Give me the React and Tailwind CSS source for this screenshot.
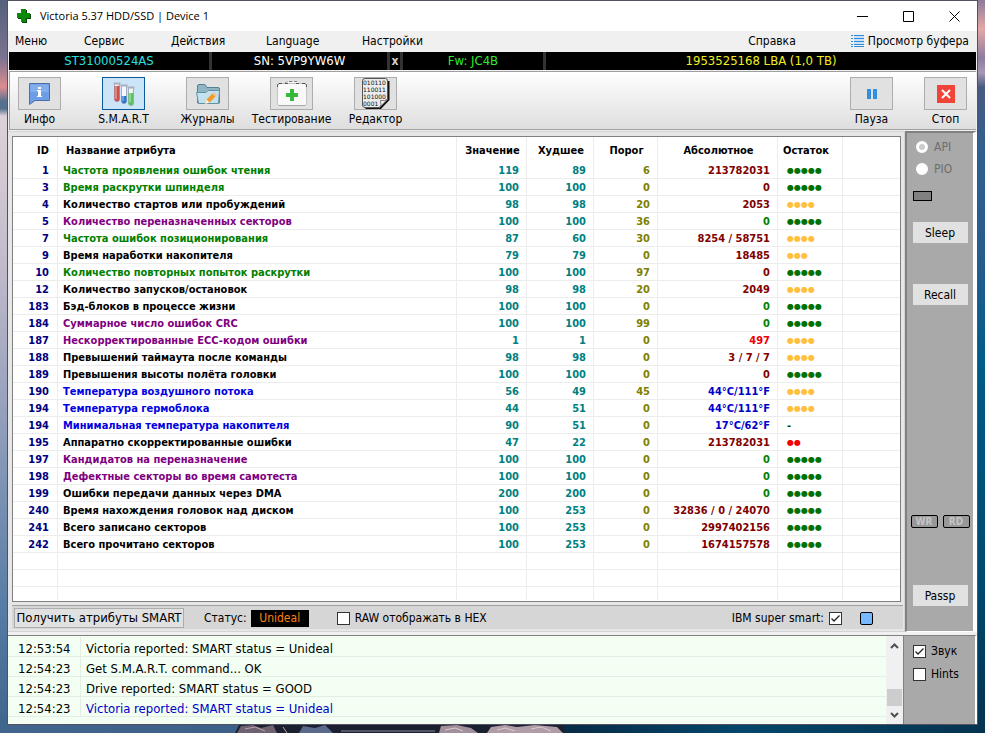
const MENU = [
    { label: "Меню", width: "w-[69px]" },
    { label: "Сервис", width: "w-[87px]" },
    { label: "Действия", width: "w-[95px]" },
    { label: "Language", width: "w-[96px]" },
    { label: "Настройки", width: "w-[96px]" },
];

const NAME_COLORS = {
    green: "text-[#008000]",
    black: "text-black",
    purple: "text-[#800080]",
    blue: "text-[#0000e0]",
};

const RAW_COLORS = {
    maroon: "text-[#800000]",
    green: "text-[#008000]",
    red: "text-[#f00000]",
    blue: "text-[#0000c8]",
};

const HEALTH_COLORS = {
    5: "text-[#007000]",
    4: "text-[#ffc040]",
    3: "text-[#ffc040]",
    2: "text-[#f00000]",
};

// id, name, name color, value, worst, threshold, raw, raw color, health dots
const ATTRIBUTES = [
    [1, "Частота проявления ошибок чтения", "green", 119, 89, 6, "213782031", "maroon", 5],
    [3, "Время раскрутки шпинделя", "green", 100, 100, 0, "0", "maroon", 5],
    [4, "Количество стартов или пробуждений", "black", 98, 98, 20, "2053", "maroon", 4],
    [5, "Количество переназначенных секторов", "purple", 100, 100, 36, "0", "green", 5],
    [7, "Частота ошибок позиционирования", "green", 87, 60, 30, "8254 / 58751", "maroon", 4],
    [9, "Время наработки накопителя", "black", 79, 79, 0, "18485", "maroon", 3],
    [10, "Количество повторных попыток раскрутки", "green", 100, 100, 97, "0", "maroon", 5],
    [12, "Количество запусков/остановок", "black", 98, 98, 20, "2049", "maroon", 4],
    [183, "Бэд-блоков в процессе жизни", "black", 100, 100, 0, "0", "green", 5],
    [184, "Суммарное число ошибок CRC", "purple", 100, 100, 99, "0", "green", 5],
    [187, "Нескорректированные ECC-кодом ошибки", "purple", 1, 1, 0, "497", "red", 4],
    [188, "Превышений таймаута после команды", "black", 98, 98, 0, "3 / 7 / 7", "maroon", 4],
    [189, "Превышения высоты полёта головки", "black", 100, 100, 0, "0", "maroon", 5],
    [190, "Температура воздушного потока", "blue", 56, 49, 45, "44°C/111°F", "blue", 4],
    [194, "Температура гермоблока", "blue", 44, 51, 0, "44°C/111°F", "blue", 4],
    [194, "Минимальная температура накопителя", "blue", 90, 51, 0, "17°C/62°F", "blue", 0],
    [195, "Аппаратно скорректированные ошибки", "black", 47, 22, 0, "213782031", "maroon", 2],
    [197, "Кандидатов на переназначение", "purple", 100, 100, 0, "0", "green", 5],
    [198, "Дефектные секторы во время самотеста", "purple", 100, 100, 0, "0", "green", 5],
    [199, "Ошибки передачи данных через DMA", "black", 200, 200, 0, "0", "green", 5],
    [240, "Время нахождения головок над диском", "black", 100, 253, 0, "32836 / 0 / 24070", "maroon", 5],
    [241, "Всего записано секторов", "black", 100, 253, 0, "2997402156", "maroon", 5],
    [242, "Всего прочитано секторов", "black", 100, 253, 0, "1674157578", "maroon", 5],
];

const LOG = [
    { time: "12:53:54", text: "Victoria reported: SMART status = Unideal" },
    { time: "12:54:23", text: "Get S.M.A.R.T. command... OK" },
    { time: "12:54:23", text: "Drive reported: SMART status = GOOD" },
    { time: "12:54:23", text: "Victoria reported: SMART status = Unideal", blue: true },
];

function InfoIcon() {
    return (
        <svg width="24" height="24" viewBox="0 0 24 24">
            <path d="M1.500 1.500H21.500V18.500H7L1.500 22.500Z" fill="#6c9ee6" stroke="#4a6ea8" />
            <path d="M2.500 2.500H20.500V10H2.500Z" fill="#82aeee" />
            <path d="M10 5H13V7H10ZM9 8H13V14H14V15H9V14H10V9H9Z" fill="#fff" />
        </svg>
    );
}

function TubesIcon() {
    return (
        <svg width="24" height="26" viewBox="0 0 24 26">
            <g stroke="#a4aec0">
                <path d="M2.500 2.500H7.500V18A2.500 2.500 0 0 1 2.500 18Z" fill="#f0e4e8" />
                <path d="M9.500 4.500H14.500V20A2.500 2.500 0 0 1 9.500 20Z" fill="#f4f8ff" />
                <path d="M16.500 6.500H21.500V22A2.500 2.500 0 0 1 16.500 22Z" fill="#e8f4ea" />
            </g>
            <path d="M2.500 5H7.500V18A2.500 2.500 0 0 1 2.500 18Z" fill="#d0504c" />
            <path d="M9.500 15H14.500V20A2.500 2.500 0 0 1 9.500 20Z" fill="#2f78cc" />
            <path d="M16.500 12H21.500V22A2.500 2.500 0 0 1 16.500 22Z" fill="#5cc45c" />
            <path d="M4 4V18M11 6V20M18 8V21" stroke="#fff" strokeOpacity="0.6" />
            <path d="M1.500 2.500H8.500M8.500 4.500H15.500M15.500 6.500H22.500" stroke="#a8b0c0" strokeWidth="2" />
        </svg>
    );
}

function FolderIcon() {
    return (
        <svg width="26" height="24" viewBox="0 0 26 24">
            <path d="M2.500 21V4Q2.500 2.500 4 2.500H10L12 5.500H23Q24.500 5.500 24.500 7V21Z" fill="#8fb4c4" stroke="#56808f" />
            <path d="M3.500 21.500 1.500 10.500H11L13 8.500H24.500L23.500 21.500Z" fill="#c2e2ee" stroke="#6292a4" />
            <path d="M10 22 11.500 17.500 17.500 11.500 20.500 14.500 14.500 20.500Z" fill="#f59a28" />
            <path d="M17.500 11.500 19 10 22 13 20.500 14.500Z" fill="#e8c49c" />
            <path d="M10 22 11.500 17.500 14.500 20.500Z" fill="#fff2dc" />
        </svg>
    );
}

function KitIcon() {
    return (
        <svg width="32" height="28" viewBox="0 0 32 28">
            <path d="M9 3.500 11 1.500H21L23 3.500" fill="#f4f4f4" stroke="#777" strokeDasharray="3 2" />
            <rect x="1.500" y="3.500" width="29" height="22" rx="2" fill="#f9f9f9" stroke="#c4c4c4" />
            <path d="M1.500 7V5L3 3.500H6M26 3.500H29L30.500 5V7M9 3.500H12M20 3.500H23" fill="none" stroke="#555" />
            <path d="M3 25.500H29" stroke="#aaa" />
            <path d="M14 9H18V13H22V17H18V21H14V17H10V13H14Z" fill="#35b83c" />
        </svg>
    );
}

function HexIcon() {
    return (
        <svg width="30" height="31" viewBox="0 0 30 31">
            <path d="M3 3H28.500V22L20 31H5L3 29Z" fill="#111" />
            <path d="M4 .5H24.500Q26.500.5 26.500 3V21L18.500 29.500H4Q1.500 29.500 1.500 27V3Q1.500.5 4 .5Z" fill="#ececec" stroke="#555" />
            <g fontFamily="DejaVu Sans, sans-serif" fontSize="6" fill="#111">
                <text x="2" y="7">010110</text>
                <text x="2" y="14">110011</text>
                <text x="2" y="21">101000</text>
                <text x="2" y="28">0001</text>
            </g>
            <path d="M18.500 29.500Q21 27 19.500 22.500Q24 23.500 26.500 21Z" fill="#fff" stroke="#777" />
        </svg>
    );
}

function PauseIcon() {
    return (
        <svg width="10" height="10" viewBox="0 0 10 10" fill="#2f90e0">
            <path d="M0 0H4V10H0ZM6 0H10V10H6Z" />
        </svg>
    );
}

function StopIcon() {
    return (
        <svg width="18" height="18" viewBox="0 0 18 18">
            <path d="M0 0H18V18H0Z" fill="#f04438" />
            <path d="M5 5 13 13M13 5 5 13" stroke="#fff" strokeWidth="2" />
        </svg>
    );
}

function ToolButton({ label, active, children }) {
    return (
        <button className="flex w-[43px] flex-col items-center gap-[1px]">
            <span className={`flex h-[33px] w-[43px] items-center justify-center border ${active ? "border-[#0a5a9c] bg-[#cce4f7]" : "border-[#adadad] bg-[#e1e1e1]"}`}>
                {children}
            </span>
            <span className="whitespace-nowrap leading-4">{label}</span>
        </button>
    );
}

function Checkbox({ id, checked }) {
    return (
        <span className="grid size-[13px]">
            <input
                id={id}
                type="checkbox"
                defaultChecked={checked}
                className="peer col-start-1 row-start-1 size-[13px] appearance-none border border-[#333] bg-white"
            />
            <svg viewBox="0 0 13 13" className="pointer-events-none invisible col-start-1 row-start-1 size-[13px] peer-checked:visible">
                <path d="M2.500 6.500 5 9 10.500 3.500" fill="none" stroke="#222" strokeWidth="1.300" />
            </svg>
        </span>
    );
}

function Radio({ id, label, checked }) {
    return (
        <div className="flex items-center gap-1.5 text-[#6d6d6d]">
            <input
                id={id}
                type="radio"
                name="access"
                disabled
                defaultChecked={checked}
                className="size-3 appearance-none rounded-full border-3 border-white bg-white checked:bg-[#cccccc]"
            />
            <label htmlFor={id}>{label}</label>
        </div>
    );
}

function SideButton({ children }) {
    return <button className="h-[21px] w-[55px] bg-[#e1e1e1]">{children}</button>;
}

function AttributeTable() {
    const line = "border-r border-[#ececec]";
    const cell = `${line} border-b pt-0.5 pr-[7px] text-right`;
    const head = `${line} pt-0.5 pl-0.5`;

    return (
        <table className="w-full table-fixed border-separate border-spacing-0 text-[11px] leading-[14px] font-bold whitespace-nowrap">
            <colgroup>
                <col className="w-[45px]" />
                <col />
                <col className="w-[70px]" />
                <col className="w-[67px]" />
                <col className="w-[64px]" />
                <col className="w-[120px]" />
                <col className="w-[65px]" />
                <col className="w-[57px]" />
            </colgroup>
            <thead>
                <tr className="h-[25px]">
                    <th scope="col" className={`${line} pt-0.5 pr-2 text-right`}>ID</th>
                    <th scope="col" className={`${line} pt-0.5 pl-2 text-left`}>Название атрибута</th>
                    <th scope="col" className={head}>Значение</th>
                    <th scope="col" className={head}>Худшее</th>
                    <th scope="col" className={head}>Порог</th>
                    <th scope="col" className={head}>Абсолютное</th>
                    <th scope="col" className={`${line} pt-0.5 pl-[5px] text-left`}>Остаток</th>
                    <td />
                </tr>
            </thead>
            <tbody>
                {ATTRIBUTES.map(([id, name, color, value, worst, limit, raw, rawColor, dots], i) => (
                    <tr key={i} className="h-[17px]">
                        <td className={`${line} border-b pt-0.5 pr-2 text-right text-[#000080]`}>{id}</td>
                        <td className={`${line} border-b pt-0.5 pl-[5px] ${NAME_COLORS[color]}`}>{name}</td>
                        <td className={`${cell} text-[#008080]`}>{value}</td>
                        <td className={`${cell} text-[#008080]`}>{worst}</td>
                        <td className={`${cell} text-[#808000]`}>{limit}</td>
                        <td className={`${cell} ${RAW_COLORS[rawColor]}`}>{raw}</td>
                        {dots ? (
                            <td className={`${line} border-b pt-0.5 pl-[9px] font-['DejaVu_Sans',sans-serif] text-[8px] font-normal ${HEALTH_COLORS[dots]}`}>
                                {"●".repeat(dots)}
                            </td>
                        ) : (
                            <td className={`${line} border-b pt-0.5 pl-[9px] text-[#005000]`}>-</td>
                        )}
                        <td className="border-b border-[#ececec]" />
                    </tr>
                ))}
                {["h-[17px]", "h-[17px]", "h-[13px]"].map((height, i) => (
                    <tr key={`empty-${i}`} className={height}>
                        {Array.from({ length: 8 }, (_, j) => (
                            <td key={j} className={`border-[#ececec] ${j < 7 ? "border-r" : ""} ${i < 2 ? "border-b" : ""}`} />
                        ))}
                    </tr>
                ))}
            </tbody>
        </table>
    );
}

function TitleBar() {
    return (
        <header className="flex h-[30px] items-center bg-white pr-[17px] pl-2">
            <svg width="16" height="16" viewBox="0 0 16 16">
                <path d="M6 2H11V6H15V11H11V15H6V11H2V6H6Z" fill="#064a06" />
                <path d="M5 1H10V5H14V10H10V14H5V10H1V5H5Z" fill="#0a8a0a" />
            </svg>
            <h1 className="ml-2 font-['Open_Sans','Noto_Sans',sans-serif] text-[11px]">Victoria 5.37 HDD/SSD | Device 1</h1>
            <div className="ml-auto flex items-center gap-[35px]">
                <button aria-label="Minimize">
                    <svg width="11" height="11" viewBox="0 0 11 11" stroke="#000"><path d="M0 5.500H11" /></svg>
                </button>
                <button aria-label="Maximize">
                    <svg width="11" height="11" viewBox="0 0 11 11" stroke="#000" fill="none"><path d="M.5.5H10.500V10.500H.5Z" /></svg>
                </button>
                <button aria-label="Close">
                    <svg width="11" height="11" viewBox="0 0 11 11" stroke="#000"><path d="M.5.5 10.500 10.500M10.500.5.5 10.500" /></svg>
                </button>
            </div>
        </header>
    );
}

function MenuBar() {
    return (
        <nav className="flex h-[21px] items-center bg-[#f0f0f0] pr-2 pb-0.5 pl-[7px]">
            {MENU.map((item) => (
                <button key={item.label} className={`${item.width} text-left`}>{item.label}</button>
            ))}
            <button className="mr-[55px] ml-auto">Справка</button>
            <button className="flex items-center gap-1">
                <svg width="13" height="12" viewBox="0 0 13 12" stroke="#2f8ad8">
                    <path d="M0 .5H2M3 .5H13M0 3.500H2M3 3.500H13M0 6.500H2M3 6.500H13M0 9.500H2M3 9.500H13M0 11.500H2M3 11.500H13" />
                    <path d="M3 2H13M3 5H13M3 8H13" stroke="#a8d4f4" />
                </svg>
                Просмотр буфера
            </button>
        </nav>
    );
}

function DriveBar() {
    return (
        <div className="mx-px flex h-[18px] bg-black text-center text-[13px] leading-[18px]">
            <div className="w-[200px] text-[#28e0e0]">ST31000524AS</div>
            <div className="w-[178px] border-l-3 border-[#333] text-white">SN: 5VP9YW6W</div>
            <button className="w-4 border-x-3 border-[#333] text-xs font-bold text-[#d0d0d0]">x</button>
            <div className="w-[140px] text-[#30e830]">Fw: JC4B</div>
            <div className="flex-1 border-l-3 border-[#333] text-[#f0f020]">1953525168 LBA (1,0 TB)</div>
        </div>
    );
}

function Toolbar() {
    return (
        <div className="mx-px mt-px flex h-[59px] justify-between border-y border-l border-[#a0a0a0] bg-gradient-to-b from-white to-[#dedede] pt-[5px] pr-[9px] pl-2">
            <div className="flex gap-[41px]">
                <ToolButton label="Инфо"><InfoIcon /></ToolButton>
                <ToolButton label="S.M.A.R.T" active><TubesIcon /></ToolButton>
                <ToolButton label="Журналы"><FolderIcon /></ToolButton>
                <ToolButton label="Тестирование"><KitIcon /></ToolButton>
                <ToolButton label="Редактор"><HexIcon /></ToolButton>
            </div>
            <div className="flex gap-[31px]">
                <ToolButton label="Пауза"><PauseIcon /></ToolButton>
                <ToolButton label="Стоп"><StopIcon /></ToolButton>
            </div>
        </div>
    );
}

function StatusBar() {
    return (
        <div className="mt-[3px] flex h-6 items-center border-t border-[#a0a0a0] bg-[#d6d6d6] pt-px pr-[30px] pl-0.5 text-xs">
            <button className="h-5 w-[170px] border border-[#adadad] bg-[#e1e1e1] text-[13px] leading-[18px] whitespace-nowrap">Получить атрибуты SMART</button>
            <span className="ml-5">Статус:</span>
            <span className="ml-1 h-[17px] w-[58px] bg-black text-center leading-[17px] text-[#ff8010]">Unideal</span>
            <div className="ml-7 flex items-center gap-[5px]">
                <Checkbox id="raw-hex" />
                <label htmlFor="raw-hex">RAW отображать в HEX</label>
            </div>
            <div className="ml-auto flex items-center gap-[5px]">
                <label htmlFor="super-smart">IBM super smart:</label>
                <Checkbox id="super-smart" checked />
            </div>
            <span className="ml-[18px] size-[13px] rounded-[2px] border border-black bg-[#78b8ff]" />
        </div>
    );
}

function SidePanel() {
    return (
        <aside className="flex w-[72px] flex-col items-center border-t-2 border-r-4 border-b border-l-2 border-t-[#808080] border-r-white border-b-white border-l-[#808080] bg-[#a9a9a9] pb-[25px]">
            <div className="flex flex-col gap-1.5 self-start pt-1.5 pl-[9px] leading-4">
                <Radio id="api" label="API" checked />
                <Radio id="pio" label="PIO" />
            </div>
            <span className="mt-3.5 ml-1.5 h-2.5 w-[19px] self-start border border-black bg-[#808080]" />
            <div className="mt-[21px] flex flex-col gap-[41px]">
                <SideButton>Sleep</SideButton>
                <SideButton>Recall</SideButton>
            </div>
            <div className="mt-auto mb-[57px] flex gap-[5px] text-[10px] leading-[11px] font-bold text-[#c4c4c4]">
                <span className="w-[27px] rounded-[2px] border border-black bg-[#989898] text-center">WR</span>
                <span className="w-[27px] rounded-[2px] border border-black bg-[#989898] text-center">RD</span>
            </div>
            <SideButton>Passp</SideButton>
        </aside>
    );
}

function LogPanel() {
    return (
        <div className="flex flex-1 border-t border-r border-[#808080] bg-[#f2fff2]">
            <table className="flex-1 border-separate border-spacing-0 text-[13px] leading-[15px]">
                <tbody className="block pt-px">
                    {LOG.map((row, i) => (
                        <tr key={i} className="flex h-5 border-b border-[#e4eee4]">
                            <td className="w-[73px] border-r border-[#e4eee4] pt-1 pl-2.5">{row.time}</td>
                            <td className={`pt-1 pl-[5px] ${row.blue ? "text-[#0000c8]" : ""}`}>{row.text}</td>
                        </tr>
                    ))}
                </tbody>
            </table>
            <div className="flex w-[17px] flex-col items-center justify-between bg-[#f0f0f0] py-1">
                <svg width="9" height="12" viewBox="0 0 9 12" fill="none" stroke="#505050" strokeWidth="2"><path d="M1 8 4.500 4.500 8 8" /></svg>
                <div className="mt-auto mb-1 h-[17px] w-[15px] bg-[#cdcdcd]" />
                <svg width="9" height="10" viewBox="0 0 9 10" fill="none" stroke="#505050" strokeWidth="2"><path d="M1 3 4.500 6.500 8 3" /></svg>
            </div>
        </div>
    );
}

function Rocks() {
    return (
        <svg width="330" height="8" viewBox="0 0 330 8">
            <path d="M0 8 4 0H328L330 8Z" fill="#1b2030" />
            <path d="M2 8 6 1 18 0 26 3 38 0 42 8Z" fill="#6f6270" />
            <path d="M10 4 20 2 30 6M48 2 52 8" stroke="#b8a4a8" fill="none" />
            <path d="M64 8 68 1 80 3 90 0 98 8Z" fill="#59698a" />
            <path d="M106 6H200" stroke="#8c8c94" />
            <path d="M204 8 206 1 222 0 236 3 243 8Z" fill="#a18f9c" />
            <path d="M252 8 256 2 270 0 282 2 300 0 322 2 328 8Z" fill="#b09ca6" />
            <path d="M210 5 220 3 228 6M262 5 270 3 280 6M296 4 306 2 316 6" stroke="#dccbcd" fill="none" />
        </svg>
    );
}

export default function App() {
    return (
        <div className="flex min-h-screen flex-col bg-[#053c5c] font-['DejaVu_Sans_Condensed','DejaVu_Sans',sans-serif] text-xs text-black">
            <div className="flex flex-1">
                <div className="w-[7px] bg-[linear-gradient(#54617c_0%,#7c7390_8%,#dc8c90_12%,#56708f_14%,#56708f_15%,#dcd2d8_16%,#c4bccc_35%,#8e9cba_60%,#547ba4_85%,#41668e_100%)]" />
                <div className="flex min-w-0 flex-1 flex-col border border-[#555060] bg-[#f0f0f0]">
                    <TitleBar />
                    <MenuBar />
                    <DriveBar />
                    <Toolbar />
                    <main className="mt-px flex flex-1">
                        <div className="flex min-w-0 flex-1 flex-col border-t border-r border-b border-[#d4d4d4] bg-[#e6e6e6] pt-1 pr-px pb-0.5 pl-1">
                            <div className="mr-0.5 flex-1 border border-[#808080] bg-white">
                                <AttributeTable />
                            </div>
                            <StatusBar />
                        </div>
                        <SidePanel />
                    </main>
                    <footer className="mt-[3px] flex h-[89px]">
                        <LogPanel />
                        <div className="flex w-[73px] flex-col gap-2.5 border-t border-r-2 border-t-[#808080] border-r-white bg-[#a9a9a9] pt-[9px] pl-[9px]">
                            <div className="flex items-center gap-[5px]">
                                <Checkbox id="sound" checked />
                                <label htmlFor="sound" className="leading-[13px]">Звук</label>
                            </div>
                            <div className="flex items-center gap-[5px]">
                                <Checkbox id="hints" />
                                <label htmlFor="hints" className="leading-[13px]">Hints</label>
                            </div>
                        </div>
                    </footer>
                </div>
                <div className="w-[7px] bg-[linear-gradient(#8a7c98_0%,#e4a8a8_4%,#8e7c9c_8%,#a898b4_10%,#4a5a80_12%,#2f6090_22%,#285c8e_35%,#005c88_50%,#004a70_80%,#043450_100%)]" />
            </div>
            <div className="flex h-2 bg-[linear-gradient(90deg,#41668e_0%,#3c6088_24%,#062c48_58%,#05466a_75%,#043450_100%)] pl-[235px]">
                <Rocks />
            </div>
        </div>
    );
}
